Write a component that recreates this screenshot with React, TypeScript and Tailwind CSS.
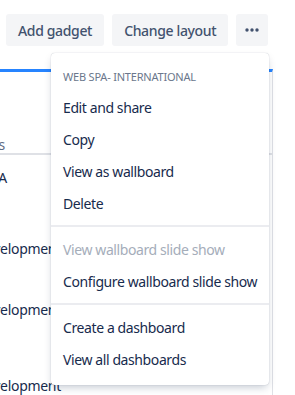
import React from "react";

const font = { fontFamily: '"Noto Sans", "Open Sans", sans-serif' };

const groups = [
  [
    { label: "Edit and share" },
    { label: "Copy" },
    { label: "View as wallboard" },
    { label: "Delete" },
  ],
  [
    { label: "View wallboard slide show", disabled: true },
    { label: "Configure wallboard slide show" },
  ],
  [{ label: "Create a dashboard" }, { label: "View all dashboards" }],
];

const App = () => {
  return (
    <div className="relative w-[295px] h-[395px] overflow-hidden bg-white font-['Noto_Sans',sans-serif]">
      {/* Barra de acciones */}
      <div className="flex items-center gap-2 pl-[6px] pt-[14px] h-[46px]">
        <button className="h-8 px-3 rounded-[3px] bg-[#F4F5F7] text-[14px] font-medium tracking-[-0.35px] text-[#42526E]">
          Add gadget
        </button>
        <button className="h-8 px-3 rounded-[3px] bg-[#F4F5F7] text-[14px] font-medium tracking-[-0.35px] text-[#42526E]">
          Change layout
        </button>
        <button className="h-8 w-8 rounded-[3px] bg-[#F4F5F7] flex items-center justify-center">
          <svg width="14" height="4" viewBox="0 0 14 4" fill="#42526E">
            <circle cx="2" cy="2" r="1.7" />
            <circle cx="7" cy="2" r="1.7" />
            <circle cx="12" cy="2" r="1.7" />
          </svg>
        </button>
      </div>

      {/* Gadget (detras del menu) */}
      <div className="mt-[23px] w-[273px] h-[330px] border-t-[3px] border-[#2684FF] border-r border-r-[#DFE1E6] overflow-hidden text-[14px] tracking-[-0.3px]">
        <div className="h-[62px]" />
        <div className="h-[19px] flex justify-end w-[5px] whitespace-nowrap text-[#5E6C84]">Status</div>
        <div className="h-[2px] bg-[#DFE1E6]" />
        <div className="h-[12px]" />
        <div className="flex justify-end w-[7px] whitespace-nowrap text-[#172B4D]">Region EMEA</div>
        <div className="h-[50px]" />
        <div className="ml-[-24px] whitespace-nowrap text-[#172B4D]">Development</div>
        <div className="h-[40px]" />
        <div className="ml-[-24px] whitespace-nowrap text-[#172B4D]">Development</div>
        <div className="h-[55px]" />
        <div className="ml-[-24px] whitespace-nowrap text-[#172B4D]">Development</div>
      </div>

      {/* Menu desplegable */}
      <div
        style={font}
        className="absolute left-[51px] top-[53px] w-[218px] rounded-[4px] bg-white py-1 shadow-[0_4px_8px_-2px_rgba(9,30,66,0.25),0_0_1px_rgba(9,30,66,0.31)]"
      >
        {groups.map((items, gi) => (
          <div key={gi} className={gi > 0 ? "border-t-2 border-[#EBECF0] py-[6px]" : "py-[6px]"}>
            {gi === 0 && (
              <div className="h-[28px] flex items-center px-3 text-[11px] tracking-[-0.2px] text-[#6B778C]">
                WEB SPA- INTERNATIONAL
              </div>
            )}
            {items.map((item) => (
              <div
                key={item.label}
                className={
                  "h-8 flex items-center px-3 text-[14px] tracking-[-0.4px] whitespace-nowrap " +
                  (item.disabled ? "text-[#A5ADBA]" : "text-[#172B4D]")
                }
              >
                {item.label}
              </div>
            ))}
          </div>
        ))}
      </div>
    </div>
  );
};

export default App;
